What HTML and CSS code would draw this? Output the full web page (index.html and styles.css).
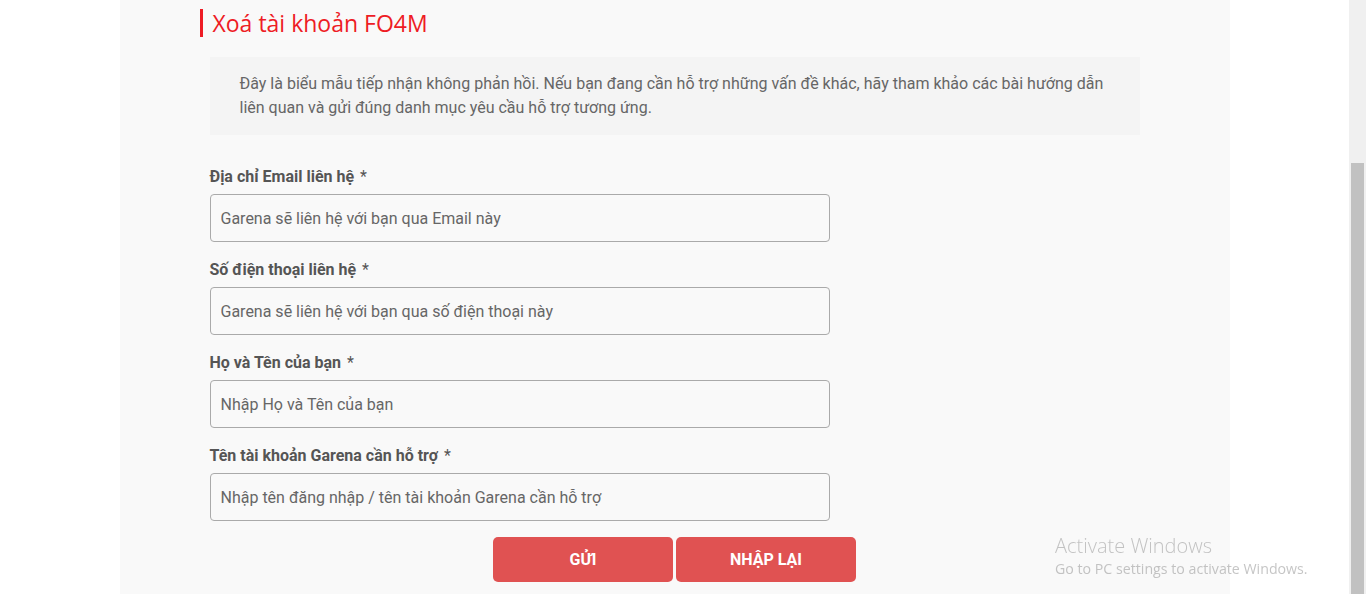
FILE: index.html
```html
<!DOCTYPE html>
<html lang="vi">
<head>
    <meta charset="UTF-8">
    <meta name="viewport" content="width=device-width, initial-scale=1.0">
    <title>Xoá tài khoản FO4M</title>
    <link rel="stylesheet" href="styles.css">
</head>
<body>
    <div class="page">
        <div class="panel">
            <h1 class="title">Xoá tài khoản FO4M</h1>

            <div class="notice">
                Đây là biểu mẫu tiếp nhận không phản hồi. Nếu bạn đang cần hỗ trợ những vấn đề khác, hãy tham khảo các bài hướng dẫn liên quan và gửi đúng danh mục yêu cầu hỗ trợ tương ứng.
            </div>

            <form class="form" onsubmit="return false;">
                <div class="field">
                    <label for="email">Địa chỉ Email liên hệ <span>*</span></label>
                    <input type="text" id="email" placeholder="Garena sẽ liên hệ với bạn qua Email này">
                </div>
                <div class="field">
                    <label for="phone">Số điện thoại liên hệ <span>*</span></label>
                    <input type="text" id="phone" placeholder="Garena sẽ liên hệ với bạn qua số điện thoại này">
                </div>
                <div class="field">
                    <label for="name">Họ và Tên của bạn <span>*</span></label>
                    <input type="text" id="name" placeholder="Nhập Họ và Tên của bạn">
                </div>
                <div class="field">
                    <label for="account">Tên tài khoản Garena cần hỗ trợ <span>*</span></label>
                    <input type="text" id="account" placeholder="Nhập tên đăng nhập / tên tài khoản Garena cần hỗ trợ">
                </div>

                <div class="actions">
                    <button type="submit">GỬI</button>
                    <button type="reset">NHẬP LẠI</button>
                </div>
            </form>
        </div>
    </div>

    <div class="scrollbar"><div class="thumb"></div></div>

    <!-- watermark của Windows -->
    <div class="watermark">
        <div class="wm-title">Activate Windows</div>
        <div class="wm-sub">Go to PC settings to activate Windows.</div>
    </div>
</body>
</html>
```

FILE: styles.css
```css
html, body {
    margin: 0;
    height: 100%;
    overflow: hidden;
}
body {
    display: flex;
    background-color: #fff;
    font-family: Roboto, 'Liberation Sans', sans-serif;
    color: #555;
}
.page {
    flex: 1;
    display: flex;
    justify-content: center;
}
.panel {
    width: 1110px;
    background-color: #f9f9f9;
    padding: 9px 90px 0;
    box-sizing: border-box;
}
.title {
    margin: 0 0 20px -10px;
    padding-left: 10px;
    border-left: 3px solid #ee1c25;
    color: #ee1c25;
    font-family: 'Open Sans', 'Noto Sans', sans-serif;
    font-weight: normal;
    font-size: 23px;
    line-height: 28px;
}
.notice {
    background-color: #f4f4f4;
    padding: 15px 30px 15px;
    font-size: 16px;
    line-height: 24px;
    color: #666;
}
.form {
    margin-top: 31px;
}
.field {
    width: 620px;
    margin-bottom: 17px;
}
.field label {
    display: block;
    font-weight: bold;
    font-size: 16px;
    line-height: 21px;
    color: #555;
    margin-bottom: 7px;
}
.field label span {
    font-weight: normal;
    margin-left: 2px;
}
.field input {
    display: block;
    width: 100%;
    height: 48px;
    box-sizing: border-box;
    padding: 0 10px;
    border: 1px solid #aaa;
    border-radius: 4px;
    background-color: #f9f9f9;
    font-family: Roboto, sans-serif;
    font-size: 16px;
    color: #333;
}
.field input::placeholder {
    color: #666;
}
.actions {
    display: flex;
    justify-content: center;
    gap: 3px;
    margin-top: -1px;
}
.actions button {
    width: 180px;
    height: 45px;
    border: none;
    border-radius: 5px;
    background-color: #e05252;
    color: #fff;
    font-family: Roboto, sans-serif;
    font-weight: bold;
    font-size: 16px;
    cursor: pointer;
}
.scrollbar {
    width: 17px;
    background-color: #f0f0f0;
    display: flex;
    flex-direction: column;
    align-items: center;
}
.thumb {
    width: 13px;
    margin-top: 163px;
    flex: 1;
    background-color: #c1c1c1;
}
.watermark {
    position: fixed;
    left: 1055px;
    top: 534px;
    font-family: 'Open Sans', 'Noto Sans', sans-serif;
    color: rgba(150, 150, 150, 0.55);
}
.wm-title {
    font-size: 20px;
    font-weight: 300;
    line-height: 24px;
}
.wm-sub {
    font-size: 14.2px;
    line-height: 22px;
}
```
